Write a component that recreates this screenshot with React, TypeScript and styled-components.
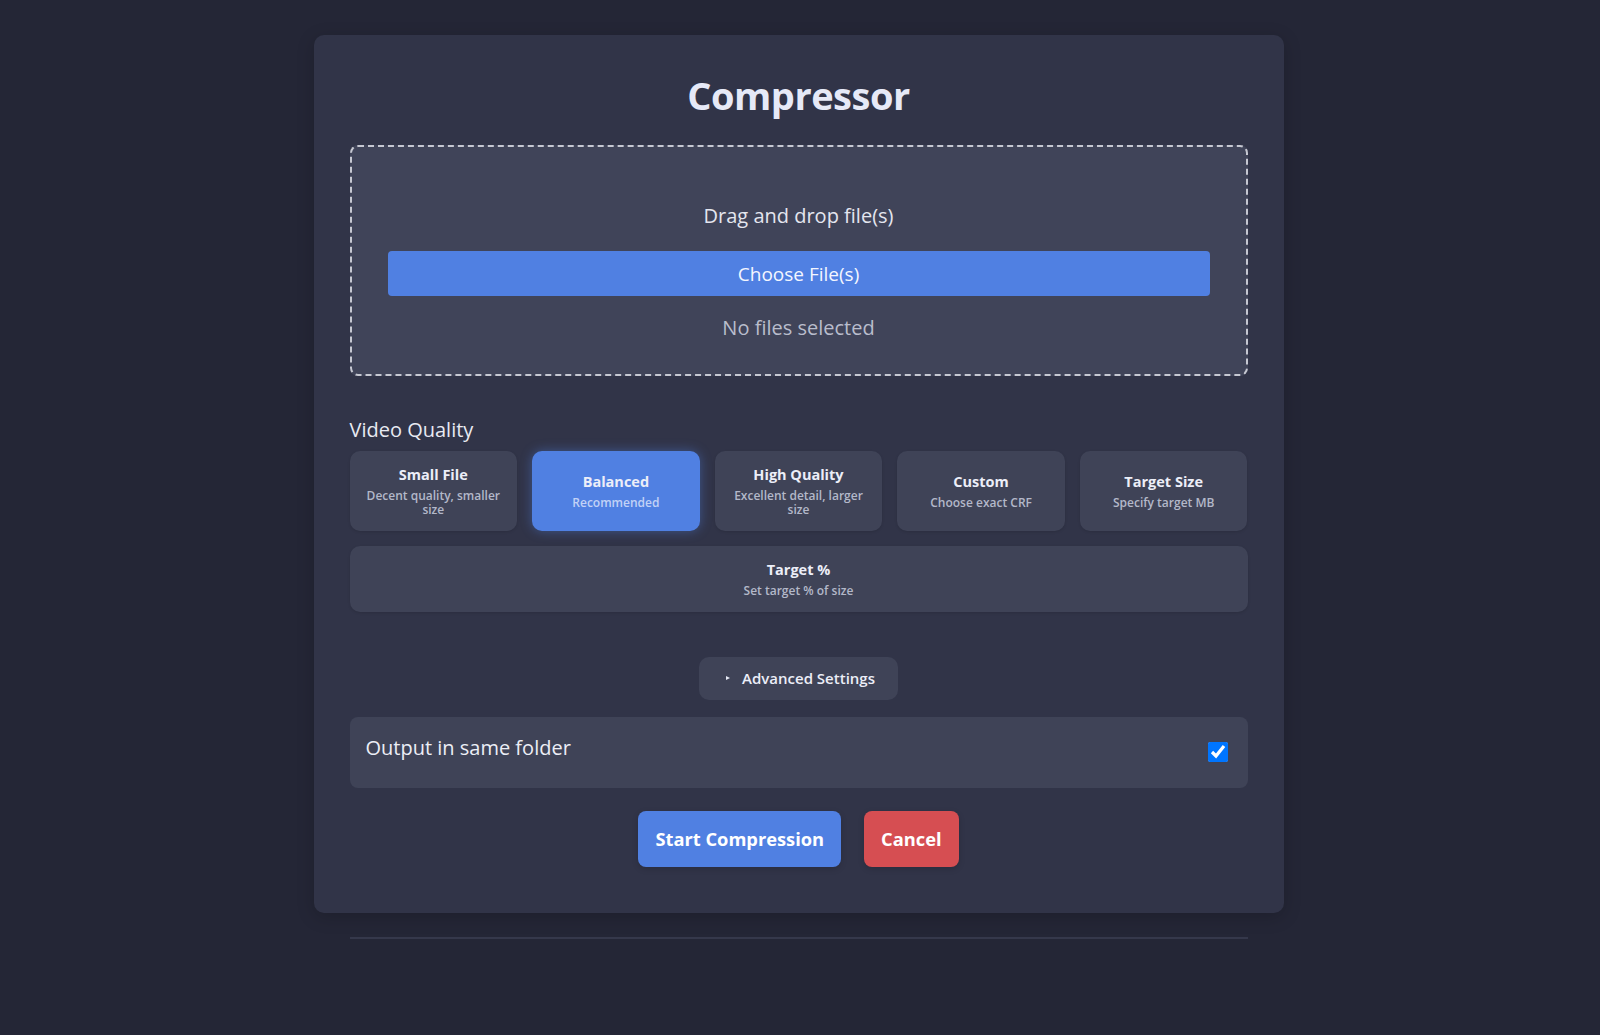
import React, { useState } from "react";
import styled, { createGlobalStyle } from "styled-components";

const GlobalStyle = createGlobalStyle`
  html, body {
    margin: 0;
    background: #242636;
    font-family: "Open Sans", "Noto Sans", sans-serif;
    color: #e6e9f4;
  }
  * {
    box-sizing: border-box;
  }
`;

const Page = styled.div`
  display: flex;
  flex-direction: column;
  align-items: center;
  padding: 35px 3px 0 0;
  min-height: 100vh;
`;

const Panel = styled.main`
  width: 970px;
  padding: 36px 36px 36px;
  background: #313448;
  border-radius: 10px;
  box-shadow: 0 4px 18px rgba(0, 0, 0, 0.18);
`;

const Title = styled.h1`
  margin: 0 0 26px;
  font-size: 38px;
  line-height: 48px;
  font-weight: 700;
  letter-spacing: -0.5px;
  text-align: center;
  color: #e6e9f7;
`;

const DropZone = styled.div`
  border: 2px dashed rgba(222, 224, 232, 0.85);
  border-radius: 8px;
  background: #404459;
  padding: 55px 36px 32px;
  text-align: center;
`;

const DropText = styled.p`
  margin: 0;
  font-size: 20px;
  line-height: 28px;
  color: #e4e6ef;
`;

const ChooseButton = styled.button`
  display: block;
  width: 100%;
  height: 45px;
  margin-top: 21px;
  border: none;
  border-radius: 4px;
  background: #5080e2;
  color: #f4f6ff;
  font-family: inherit;
  font-size: 19px;
  cursor: pointer;
`;

const NoFiles = styled.p`
  margin: 18px 0 0;
  font-size: 20px;
  line-height: 28px;
  color: #b9bdcc;
`;

const SectionLabel = styled.h2`
  margin: 41px 0 8px;
  font-size: 20px;
  line-height: 26px;
  font-weight: 500;
  color: #e8eaf2;
`;

const Options = styled.div`
  display: flex;
  flex-wrap: wrap;
  gap: 15px;
`;

const OptionCard = styled.button<{ $active?: boolean }>`
  flex: 1 1 150px;
  display: flex;
  flex-direction: column;
  justify-content: center;
  align-items: center;
  padding: 13.5px 12px;
  border: none;
  border-radius: 10px;
  background: ${(p) => (p.$active ? "#5080e2" : "#3f4357")};
  box-shadow: ${(p) =>
    p.$active ? "0 0 12px rgba(80, 128, 226, 0.45)" : "0 1px 3px rgba(0, 0, 0, 0.12)"};
  font-family: inherit;
  text-align: center;
  cursor: pointer;

  strong {
    display: block;
    margin-bottom: 4px;
    font-size: 14.5px;
    line-height: 20px;
    font-weight: 700;
    color: #eceef8;
  }

  span {
    display: block;
    font-size: 12px;
    line-height: 14.5px;
    font-weight: 600;
    color: ${(p) => (p.$active ? "#c2d2f6" : "#b3b8c9")};
  }
`;

const AdvancedRow = styled.div`
  display: flex;
  justify-content: center;
  margin-top: 45px;
`;

const AdvancedButton = styled.button`
  display: flex;
  align-items: center;
  height: 43px;
  padding: 0 23px;
  border: none;
  border-radius: 10px;
  background: #3f4357;
  color: #eceef8;
  font-family: inherit;
  font-size: 15px;
  font-weight: 600;
  cursor: pointer;
`;

const Caret = styled.i`
  width: 0;
  height: 0;
  margin: 0 12px 0 4px;
  border-top: 2.5px solid transparent;
  border-bottom: 2.5px solid transparent;
  border-left: 4px solid #e6e9f4;
`;

const OutputRow = styled.label`
  display: flex;
  align-items: center;
  justify-content: space-between;
  height: 71px;
  margin-top: 17px;
  padding: 0 20px 0 16px;
  border-radius: 8px;
  background: #3f4357;
  cursor: pointer;

  span {
    margin-bottom: 9px;
    font-size: 20px;
    font-weight: 500;
    color: #eceef6;
  }

  input {
    width: 20px;
    height: 20px;
    margin: 0;
  }
`;

const Actions = styled.div`
  display: flex;
  justify-content: center;
  gap: 23px;
  margin: 23px 0 10px;
`;

const ActionButton = styled.button<{ $danger?: boolean }>`
  height: 56px;
  padding: 0 17px;
  border: none;
  border-radius: 8px;
  background: ${(p) => (p.$danger ? "#d64e52" : "#5080e2")};
  box-shadow: 0 2px 6px rgba(0, 0, 0, 0.15);
  color: #ffffff;
  font-family: inherit;
  font-size: 18.3px;
  font-weight: 700;
  cursor: pointer;
`;

const Footer = styled.footer`
  width: 898px;
  margin-top: 24px;
  border-top: 2px solid #35384b;
`;

const presets = [
  { id: "small", title: "Small File", desc: "Decent quality, smaller size" },
  { id: "balanced", title: "Balanced", desc: "Recommended" },
  { id: "high", title: "High Quality", desc: "Excellent detail, larger size" },
  { id: "custom", title: "Custom", desc: "Choose exact CRF" },
  { id: "size", title: "Target Size", desc: "Specify target MB" },
  { id: "percent", title: "Target %", desc: "Set target % of size" },
];

export default function App() {
  const [preset, setPreset] = useState("balanced");
  const [sameFolder, setSameFolder] = useState(true);

  return (
    <Page>
      <GlobalStyle />
      <Panel>
        <Title>Compressor</Title>
        <DropZone>
          <DropText>Drag and drop file(s)</DropText>
          <ChooseButton>Choose File(s)</ChooseButton>
          <NoFiles>No files selected</NoFiles>
        </DropZone>

        <SectionLabel>Video Quality</SectionLabel>
        <Options>
          {presets.map((p) => (
            <OptionCard
              key={p.id}
              $active={preset === p.id}
              onClick={() => setPreset(p.id)}
            >
              <strong>{p.title}</strong>
              <span>{p.desc}</span>
            </OptionCard>
          ))}
        </Options>

        <AdvancedRow>
          <AdvancedButton>
            <Caret />
            Advanced Settings
          </AdvancedButton>
        </AdvancedRow>

        <OutputRow>
          <span>Output in same folder</span>
          <input
            type="checkbox"
            checked={sameFolder}
            onChange={(e) => setSameFolder(e.target.checked)}
          />
        </OutputRow>

        <Actions>
          <ActionButton>Start Compression</ActionButton>
          <ActionButton $danger>Cancel</ActionButton>
        </Actions>
      </Panel>
      <Footer />
    </Page>
  );
}
